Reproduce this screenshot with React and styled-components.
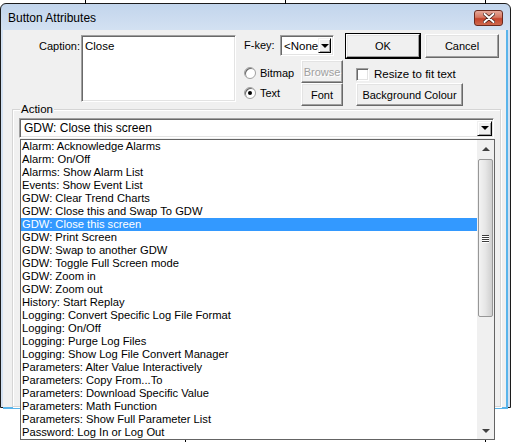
import React from "react";
import styled, { createGlobalStyle } from "styled-components";

const GlobalStyle = createGlobalStyle`
  html, body { margin: 0; padding: 0; background: #ffffff; }
  body { font-family: "Liberation Sans", Arial, sans-serif; font-size: 11px; color: #000; }
`;

const Page = styled.div`
  position: relative;
  width: 513px;
  height: 442px;
  overflow: hidden;
  background: #ffffff;
  padding-top: 3px;
  box-sizing: border-box;
`;

const Tick = styled.span`
  position: absolute;
  left: ${(p) => p.$x}px;
  top: ${(p) => p.$y}px;
  width: 1px;
  height: 4px;
  background: #000;
`;

const Window = styled.div`
  width: 511px;
  height: 405px;
  box-sizing: border-box;
  border: 1px solid #1c1c1c;
  border-radius: 6px 6px 0 0;
  background: linear-gradient(#c2d5ec 0px, #d3e1f2 26px, #d3e1f2 100%);
  display: flex;
  flex-direction: column;
  padding: 0 2px 2px 2px;
`;

const TitleBar = styled.div`
  height: 26px;
  display: flex;
  align-items: center;
  justify-content: space-between;
  padding: 0 5px 0 5px;
  flex-shrink: 0;
`;

const Title = styled.span`
  font-size: 12px;
  color: #000;
  padding-top: 1px;
`;

const CloseBtn = styled.div`
  width: 29px;
  height: 16px;
  box-sizing: border-box;
  border: 1px solid #6b2a1e;
  border-radius: 3px;
  background: linear-gradient(#e6a99a 0%, #d57761 45%, #c4432b 55%, #cf6a4f 100%);
  display: flex;
  align-items: center;
  justify-content: center;
  margin-top: 1px;
`;

const Client = styled.div`
  flex: 1;
  background: #f0f0f0;
  border-bottom: 2px solid #5ab4ea;
  border-right: 2px solid #5ab4ea;
  position: relative;
  padding-top: 4px;
`;

const TopRow = styled.div`
  display: flex;
  align-items: flex-start;
  height: 72px;
`;

const CaptionLabel = styled.div`
  width: 77px;
  text-align: right;
  padding-top: 6px;
  padding-right: 1px;
`;

const Sunken = styled.div`
  box-sizing: border-box;
  background: #fff;
  border-top: 1px solid #a0a0a0;
  border-left: 1px solid #a0a0a0;
  border-right: 1px solid #fff;
  border-bottom: 1px solid #fff;
  box-shadow: inset 1px 1px 0 #696969, inset -1px -1px 0 #e3e3e3;
`;

const CaptionBox = styled(Sunken)`
  width: 155px;
  height: 67px;
  margin-top: 1px;
  padding: 4px 3px;
  font-size: 11.5px;
`;

const RightBlock = styled.div`
  margin-left: 8px;
  display: flex;
  flex-direction: column;
`;

const RowA = styled.div`
  display: flex;
  align-items: flex-start;
  height: 25px;
`;

const FLabel = styled.div`
  width: 36px;
  padding-top: 5px;
`;

const Select = styled(Sunken)`
  width: 54px;
  height: 21px;
  margin-top: 1px;
  display: flex;
  align-items: center;
  justify-content: space-between;
  padding: 0 2px 0 3px;
  font-size: 11.5px;
`;

const ArrowBox = styled.div`
  width: 15px;
  height: 15px;
  box-sizing: border-box;
  background: #f0f0f0;
  border-top: 1px solid #f0f0f0;
  border-left: 1px solid #f0f0f0;
  border-right: 1px solid #000;
  border-bottom: 1px solid #000;
  box-shadow: inset 1px 1px 0 #fff, inset -1px -1px 0 #a0a0a0;
  display: flex;
  align-items: center;
  justify-content: center;
`;

const Arrow = styled.span`
  width: 0;
  height: 0;
  border-left: 4px solid transparent;
  border-right: 4px solid transparent;
  border-top: 4px solid #000;
`;

const Button = styled.button`
  box-sizing: border-box;
  width: ${(p) => p.$w}px;
  height: ${(p) => p.$h || 24}px;
  margin-left: ${(p) => p.$ml || 0}px;
  padding: 0;
  font-family: "Liberation Sans", Arial, sans-serif;
  font-size: 11px;
  color: ${(p) => (p.disabled ? "#a0a0a0" : "#000")};
  background: #f0f0f0;
  border-top: 1px solid #fff;
  border-left: 1px solid #fff;
  border-right: 1px solid ${(p) => (p.$default ? "#000" : "#696969")};
  border-bottom: 1px solid ${(p) => (p.$default ? "#000" : "#696969")};
  box-shadow: inset -1px -1px 0 #a0a0a0, inset 1px 1px 0 #e3e3e3
    ${(p) => (p.$default ? ", 0 0 0 1px #000" : "")};
  text-shadow: ${(p) => (p.disabled ? "1px 1px 0 #fff" : "none")};
`;

const RowB = styled.div`
  display: flex;
  align-items: flex-start;
  margin-top: 1px;
`;

const Radios = styled.div`
  width: 57px;
  display: flex;
  flex-direction: column;
  padding-top: 6px;
  gap: 6px;
`;

const RadioRow = styled.div`
  display: flex;
  align-items: center;
  gap: 4px;
  height: 14px;
  font-size: 11px;
`;

const RadioCircle = styled.span`
  width: 12px;
  height: 12px;
  box-sizing: border-box;
  border-radius: 50%;
  background: #fff;
  border: 1px solid #a0a0a0;
  box-shadow: inset 1px 1px 0 #696969;
  display: flex;
  align-items: center;
  justify-content: center;
  &::after {
    content: "";
    width: 4px;
    height: 4px;
    border-radius: 50%;
    background: ${(p) => (p.$on ? "#000" : "transparent")};
  }
`;

const Stack = styled.div`
  display: flex;
  flex-direction: column;
`;

const RightCol = styled.div`
  margin-left: 13px;
  display: flex;
  flex-direction: column;
`;

const CheckRow = styled.div`
  display: flex;
  align-items: center;
  height: 14px;
  margin-top: 7px;
  margin-bottom: 2px;
  gap: 5px;
  font-size: 11.5px;
`;

const CheckBox = styled(Sunken)`
  width: 13px;
  height: 13px;
`;

const Group = styled.div`
  position: relative;
  margin: 3px 5px 0 9px;
  height: 288px;
  border: 1px solid #d5d5d5;
  box-shadow: 1px 1px 0 #fff, inset 1px 1px 0 #fff;
  padding: 8px 6px 0 6px;
`;

const Legend = styled.span`
  position: absolute;
  top: -7px;
  left: 7px;
  background: #f0f0f0;
  padding: 0 1px;
  font-size: 11.5px;
`;

const Combo = styled(Sunken)`
  height: 20px;
  display: flex;
  align-items: center;
  justify-content: space-between;
  padding: 0 1px 0 4px;
  font-size: 12px;
`;

const DropList = styled.div`
  position: absolute;
  left: 20px;
  top: 139px;
  width: 475px;
  height: 301px;
  box-sizing: border-box;
  background: #fff;
  border: 1px solid #646464;
  display: flex;
  z-index: 5;
`;

const Items = styled.div`
  flex: 1;
  display: flex;
  flex-direction: column;
`;

const Item = styled.div`
  height: 13px;
  line-height: 13px;
  padding-left: 1px;
  font-size: 11.2px;
  white-space: nowrap;
  background: ${(p) => (p.$sel ? "#3399ff" : "transparent")};
  color: ${(p) => (p.$sel ? "#fff" : "#000")};
`;

const ScrollBar = styled.div`
  width: 17px;
  background: #f0f0f0;
  display: flex;
  flex-direction: column;
  align-items: center;
`;

const ScrollArrow = styled.div`
  height: 17px;
  width: 17px;
  display: flex;
  align-items: center;
  justify-content: center;
`;

const Thumb = styled.div`
  width: 15px;
  height: 158px;
  margin-top: 2px;
  box-sizing: border-box;
  border: 1px solid #979797;
  border-radius: 2px;
  background: linear-gradient(to right, #f3f3f3, #e6e6e6 50%, #cfcfcf);
  display: flex;
  flex-direction: column;
  align-items: center;
  justify-content: center;
  gap: 1px;
`;

const Grip = styled.span`
  width: 7px;
  height: 1px;
  background: #3c3c3c;
  box-shadow: 0 1px 0 #fff;
`;

const Spacer = styled.div`
  flex: 1;
`;

const Tri = styled.span`
  width: 0;
  height: 0;
  border-left: 4px solid transparent;
  border-right: 4px solid transparent;
  ${(p) =>
    p.$up
      ? "border-bottom: 4px solid #404040;"
      : "border-top: 4px solid #404040;"}
`;

const items = [
  "Alarm: Acknowledge Alarms",
  "Alarm: On/Off",
  "Alarms: Show Alarm List",
  "Events: Show Event List",
  "GDW: Clear Trend Charts",
  "GDW: Close this and Swap To GDW",
  "GDW: Close this screen",
  "GDW: Print Screen",
  "GDW: Swap to another GDW",
  "GDW: Toggle Full Screen mode",
  "GDW: Zoom in",
  "GDW: Zoom out",
  "History: Start Replay",
  "Logging: Convert Specific Log File Format",
  "Logging: On/Off",
  "Logging: Purge Log Files",
  "Logging: Show Log File Convert Manager",
  "Parameters: Alter Value Interactively",
  "Parameters: Copy From...To",
  "Parameters: Download Specific Value",
  "Parameters: Math Function",
  "Parameters: Show Full Parameter List",
  "Password: Log In or Log Out",
];

const CloseIcon = () => (
  <svg width="12" height="10" viewBox="0 0 12 10">
    <path d="M1.5 1 L10.5 9 M10.5 1 L1.5 9" stroke="#3a1a14" strokeWidth="3.4" strokeLinecap="round" />
    <path d="M1.5 1 L10.5 9 M10.5 1 L1.5 9" stroke="#ffffff" strokeWidth="2" strokeLinecap="round" />
  </svg>
);

export default function App() {
  return (
    <>
      <GlobalStyle />
      <Page>
        <Tick $x={85} $y={0} />
        <Tick $x={285} $y={0} />
        <Tick $x={485} $y={0} />
        <Window>
          <TitleBar>
            <Title>Button Attributes</Title>
            <CloseBtn>
              <CloseIcon />
            </CloseBtn>
          </TitleBar>
          <Client>
            <TopRow>
              <CaptionLabel>Caption:</CaptionLabel>
              <CaptionBox>Close</CaptionBox>
              <RightBlock>
                <RowA>
                  <FLabel>F-key:</FLabel>
                  <Select>
                    <span>&lt;None</span>
                    <ArrowBox>
                      <Arrow />
                    </ArrowBox>
                  </Select>
                  <Button $w={74} $default $ml={12}>OK</Button>
                  <Button $w={74} $ml={5}>Cancel</Button>
                </RowA>
                <RowB>
                  <Radios>
                    <RadioRow>
                      <RadioCircle />
                      Bitmap
                    </RadioRow>
                    <RadioRow>
                      <RadioCircle $on />
                      Text
                    </RadioRow>
                  </Radios>
                  <Stack>
                    <Button $w={42} $h={23} disabled>Browse</Button>
                    <Button $w={42} $h={23}>Font</Button>
                  </Stack>
                  <RightCol>
                    <CheckRow>
                      <CheckBox />
                      Resize to fit text
                    </CheckRow>
                    <Button $w={107} $h={23}>Background Colour</Button>
                  </RightCol>
                </RowB>
              </RightBlock>
            </TopRow>
            <Group>
              <Legend>Action</Legend>
              <Combo>
                <span>GDW: Close this screen</span>
                <ArrowBox>
                  <Arrow />
                </ArrowBox>
              </Combo>
            </Group>
          </Client>
        </Window>
        <DropList>
          <Items>
            {items.map((t) => (
              <Item key={t} $sel={t === "GDW: Close this screen"}>
                {t}
              </Item>
            ))}
          </Items>
          <ScrollBar>
            <ScrollArrow>
              <Tri $up />
            </ScrollArrow>
            <Thumb>
              <Grip />
              <Grip />
              <Grip />
              <Grip />
            </Thumb>
            <Spacer />
            <ScrollArrow>
              <Tri />
            </ScrollArrow>
          </ScrollBar>
        </DropList>
        <Tick $x={485} $y={438} />
        <Tick $x={185} $y={438} />
      </Page>
    </>
  );
}
